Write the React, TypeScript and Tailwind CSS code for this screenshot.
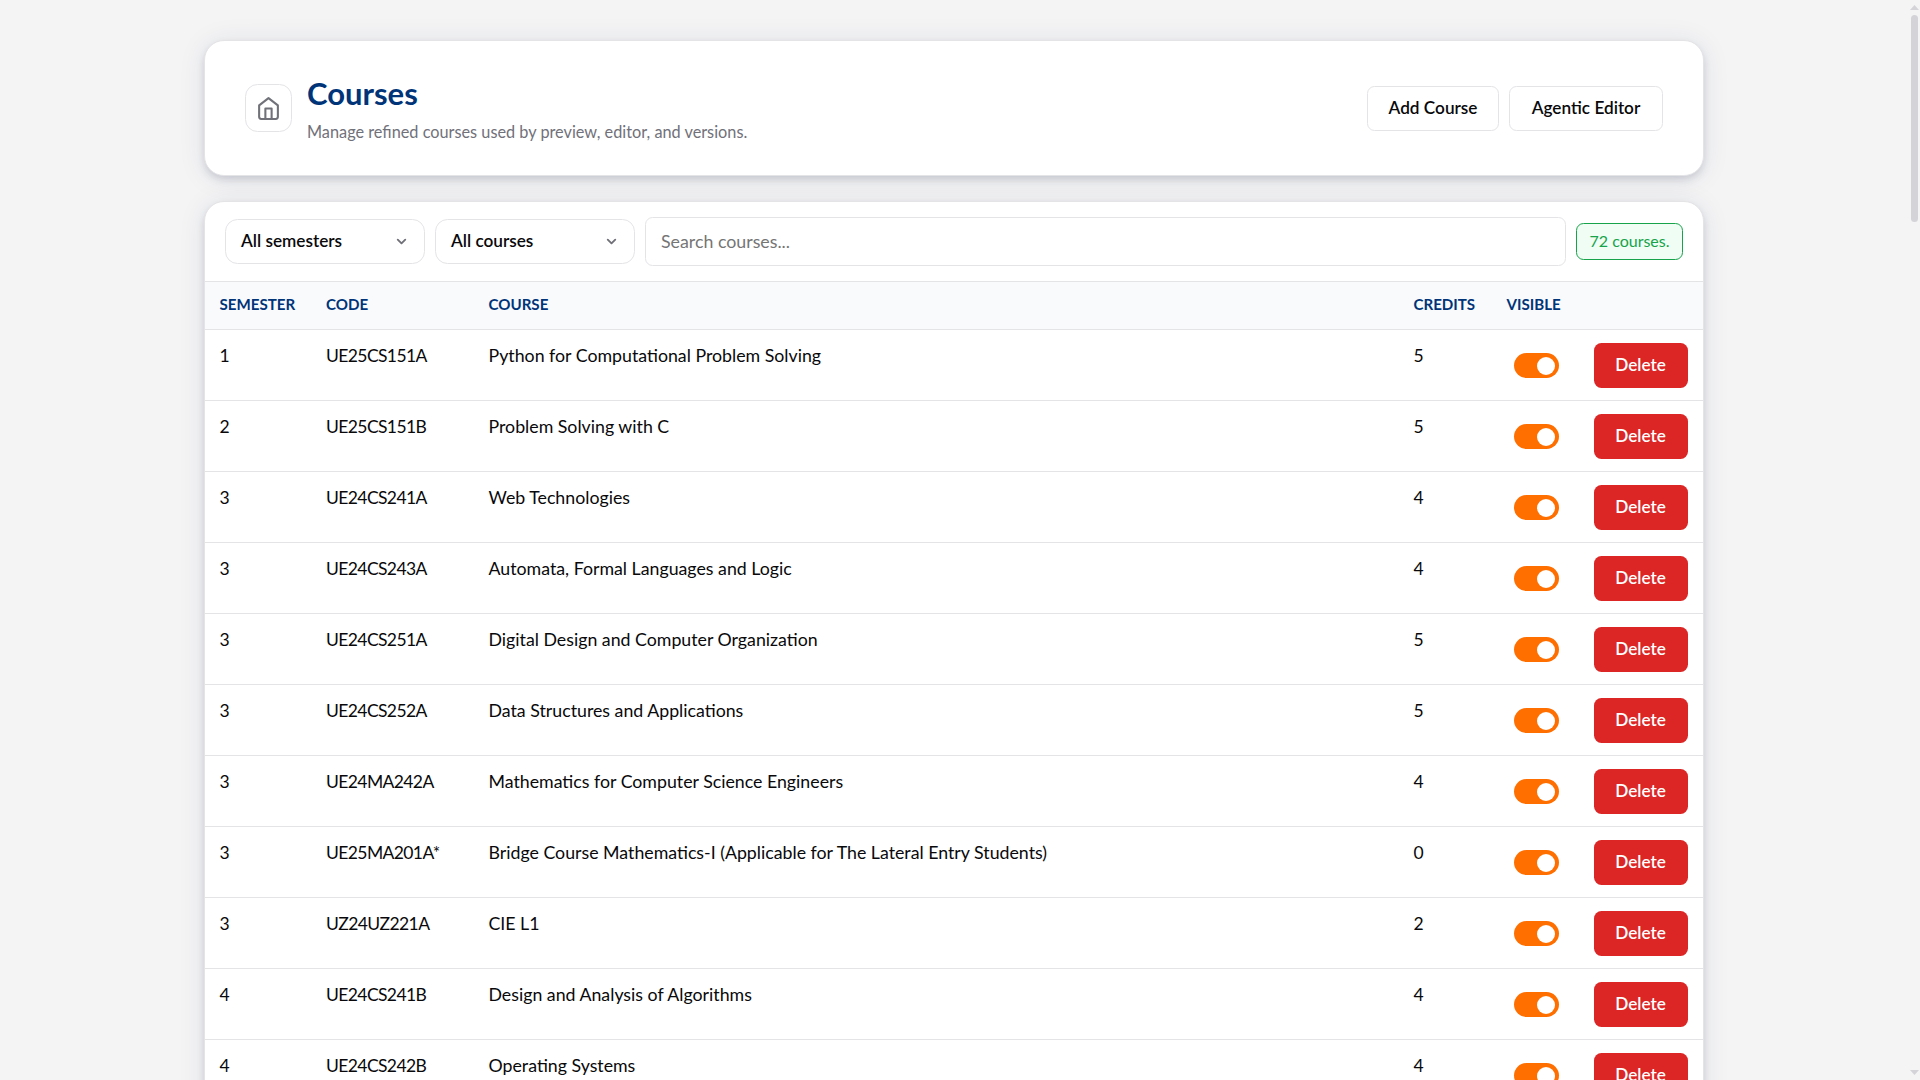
import { ChevronDown } from 'lucide-react';

const courses = [
  { semester: 1, code: 'UE25CS151A', name: 'Python for Computational Problem Solving', credits: 5 },
  { semester: 2, code: 'UE25CS151B', name: 'Problem Solving with C', credits: 5 },
  { semester: 3, code: 'UE24CS241A', name: 'Web Technologies', credits: 4 },
  { semester: 3, code: 'UE24CS243A', name: 'Automata, Formal Languages and Logic', credits: 4 },
  { semester: 3, code: 'UE24CS251A', name: 'Digital Design and Computer Organization', credits: 5 },
  { semester: 3, code: 'UE24CS252A', name: 'Data Structures and Applications', credits: 5 },
  { semester: 3, code: 'UE24MA242A', name: 'Mathematics for Computer Science Engineers', credits: 4 },
  { semester: 3, code: 'UE25MA201A*', name: 'Bridge Course Mathematics-I (Applicable for The Lateral Entry Students)', credits: 0 },
  { semester: 3, code: 'UZ24UZ221A', name: 'CIE L1', credits: 2 },
  { semester: 4, code: 'UE24CS241B', name: 'Design and Analysis of Algorithms', credits: 4 },
  { semester: 4, code: 'UE24CS242B', name: 'Operating Systems', credits: 4 },
];

const columns = 'grid grid-cols-[106.5px_162.5px_925px_93px_87px_94px] pl-[14.5px]';
const card =
  'rounded-[20px] border border-[#e4e4e7] bg-white shadow-[0_4px_8px_-1px_rgba(30,41,80,0.18),0_2px_28px_rgba(30,41,80,0.09)]';

function Select({ label }: { label: string }) {
  return (
    <button className="flex h-[45px] w-[200px] shrink-0 items-center justify-between rounded-[12.5px] border border-[#e4e4e7] bg-white px-[15px] font-semibold">
      <span className="pb-0.5 text-[17.2px]">{label}</span>
      <ChevronDown className="size-[15px] text-[#71717a]" strokeWidth={3} />
    </button>
  );
}

function Toggle() {
  return (
    <span className="flex h-[25px] w-[45px] items-center justify-end rounded-full bg-[#ff6f00] pr-1">
      <span className="size-[18px] rounded-full bg-white" />
    </span>
  );
}

export default function App() {
  return (
    <div className="flex h-screen overflow-hidden bg-[#f4f4f5] font-['Lato',sans-serif] text-[17.5px] leading-[25px] text-[#09090b]">
      <main className="flex-1 pt-10 pr-px">
        <div className="mx-auto flex w-[1500px] flex-col gap-[25px]">
          <header className={`${card} flex h-[136px] shrink-0 items-center justify-between px-10`}>
            <div className="flex items-center gap-[15px]">
              <button className="flex h-12 w-[47px] items-center justify-center rounded-[12.5px] border border-[#e4e4e7] text-[#71717a]">
                <svg className="size-[25px]" viewBox="0 0 24 24" fill="none" stroke="currentColor" strokeWidth="2" strokeLinecap="round" strokeLinejoin="round">
                  <path d="m3 9 9-7 9 7v11a2 2 0 0 1-2 2H5a2 2 0 0 1-2-2z" />
                  <path d="M9 22V12h6v10" />
                </svg>
              </button>
              <div>
                <h1 className="text-[31px] leading-[37px] font-bold text-[#003478]">Courses</h1>
                <p className="mt-[8px] -mb-[3px] text-[16.3px] leading-[24px] text-[#71717a]">
                  Manage refined courses used by preview, editor, and versions.
                </p>
              </div>
            </div>
            <div className="flex gap-[10px] text-[17.2px] font-semibold">
              <button className="h-[45px] w-[132px] rounded-[7.5px] border border-[#e4e4e7] pb-px">Add Course</button>
              <button className="h-[45px] w-[154px] rounded-[7.5px] border border-[#e4e4e7] pb-px">Agentic Editor</button>
            </div>
          </header>

          <section className={`${card} overflow-hidden`}>
            <div className="flex h-[80px] items-center gap-[10px] border-b border-[#e4e4e7] px-5">
              <Select label="All semesters" />
              <Select label="All courses" />
              <input
                className="h-[49px] min-w-0 flex-1 rounded-[7.5px] border border-[#e4e4e7] px-[15px] pb-0.5 text-[17.8px] placeholder:text-[#757575]"
                placeholder="Search courses..."
              />
              <span className="flex h-[37px] w-[107px] items-center justify-center rounded-[7.5px] border border-[#16a34a] bg-[#f0fdf4] pb-[3px] text-[16px] text-[#16a34a]">
                72 courses.
              </span>
            </div>
            <div className={`${columns} h-12 items-center border-b border-[#e4e4e7] bg-[#f8fafc] pb-0.5 text-[15.1px] font-bold text-[#003478]`}>
              <span>SEMESTER</span>
              <span>CODE</span>
              <span>COURSE</span>
              <span>CREDITS</span>
              <span>VISIBLE</span>
            </div>
            {courses.map((course) => (
              <div key={course.code} className={`${columns} h-[71px] border-b border-[#e4e4e7] pt-[13px]`}>
                <span>{course.semester}</span>
                <span className="tracking-[-0.6px]">{course.code}</span>
                <span className="text-[17.75px]">{course.name}</span>
                <span>{course.credits}</span>
                <div className="pt-[10px] pl-[7px]">
                  <Toggle />
                </div>
                <button className="h-[45px] rounded-[7.5px] bg-[#dc2626] pb-0.5 text-[17.2px] font-semibold text-white">Delete</button>
              </div>
            ))}
          </section>
        </div>
      </main>

      {/* scrollbar */}
      <div className="flex w-[11px] shrink-0 flex-col items-center pt-[5px] pb-[5px]">
        <svg className="h-[5px] w-[9px] fill-[#d4d4d8]" viewBox="0 0 9 5">
          <path d="M4.5 0 9 5H0z" />
        </svg>
        <div className="mt-[5px] h-[207px] w-[7px] rounded-full bg-[#d4d4d8]" />
        <svg className="mt-auto h-[5px] w-[9px] fill-[#d4d4d8]" viewBox="0 0 9 5">
          <path d="M0 0h9L4.5 5z" />
        </svg>
      </div>
    </div>
  );
}
